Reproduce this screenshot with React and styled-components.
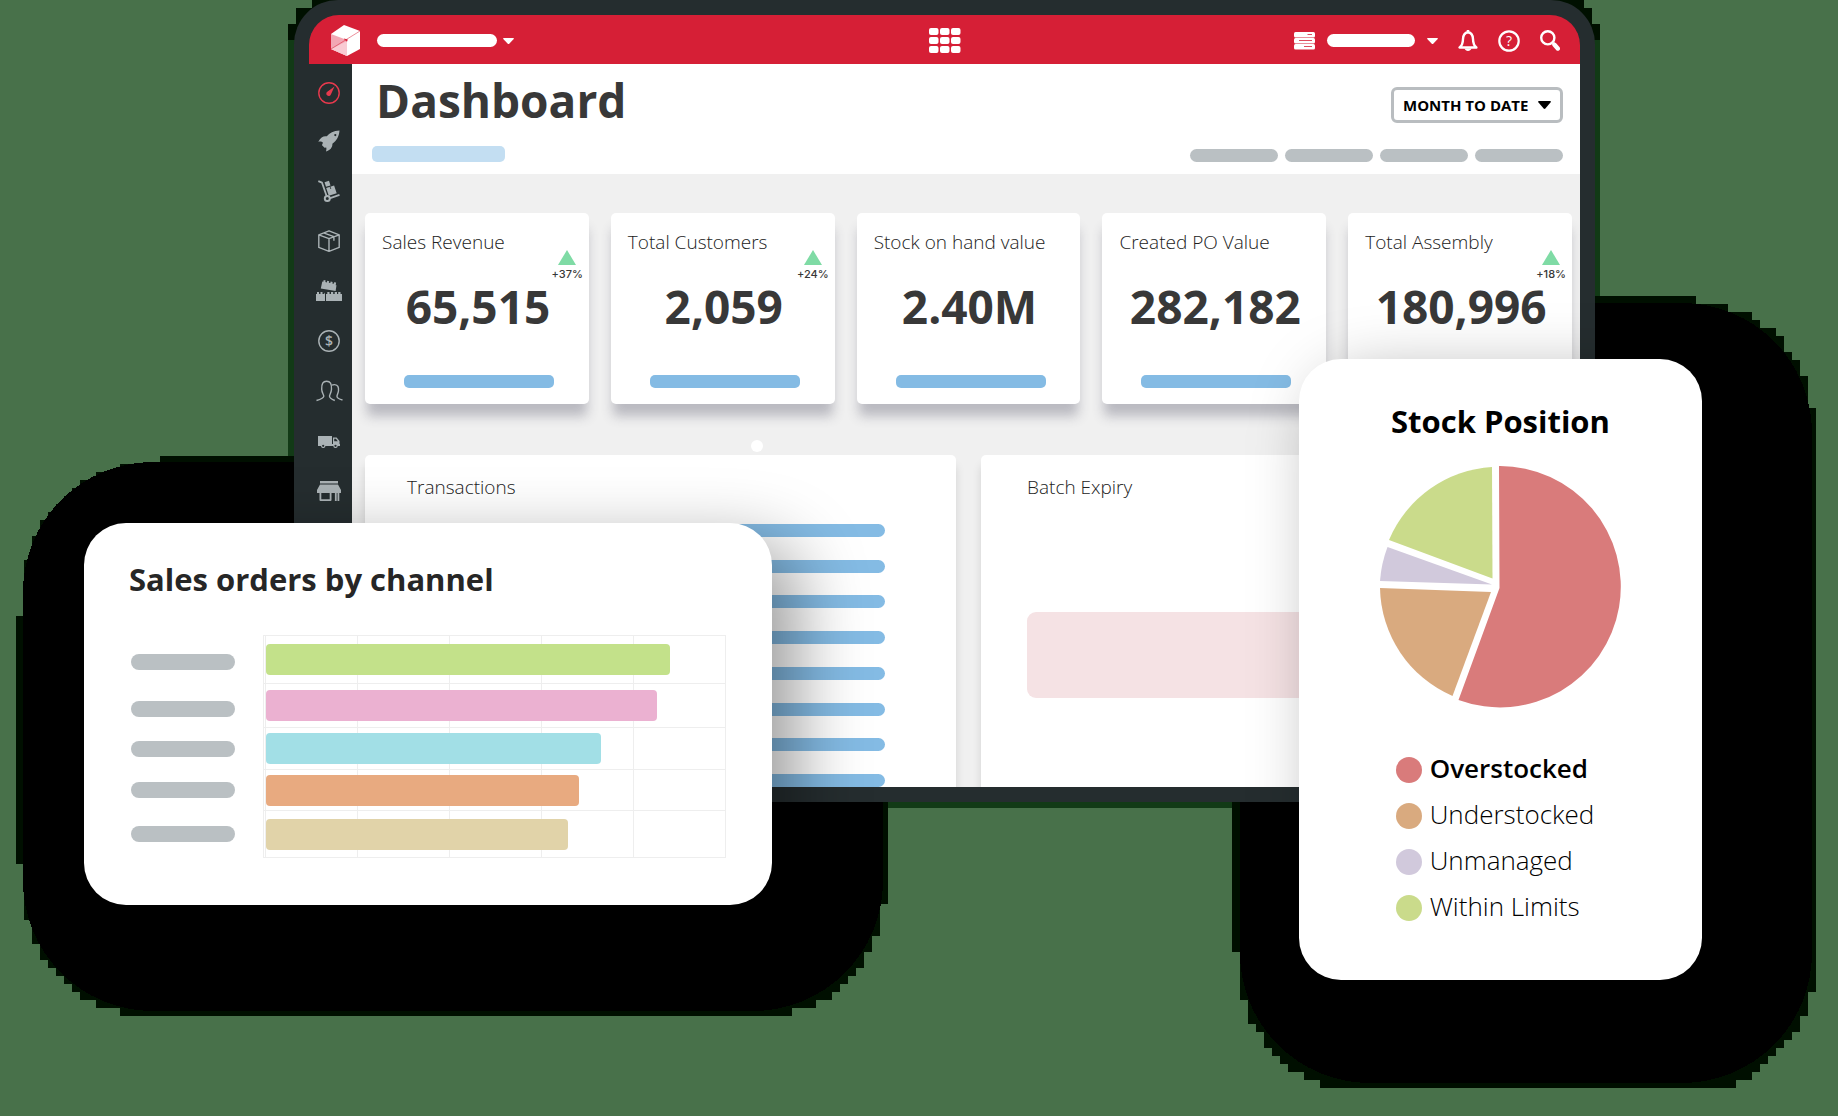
import React from "react";
import styled, { createGlobalStyle } from "styled-components";

const color = {
  page: "#48714a",
  bezel: "#252d2f",
  brand: "#d61f36",
  canvas: "#f0f0f0",
  ink: "#383838",
  grey: "#bac0c3",
  blue: "#84bbe4",
  line: "#eeeeee",
  nav: "#aab2b5",
};

const GlobalStyle = createGlobalStyle`
  *, *::before, *::after { box-sizing: border-box; }
  body {
    margin: 0;
    background: ${color.page};
    color: ${color.ink};
    font-family: "Open Sans", "Noto Sans", sans-serif;
  }
  h1, h2, h3, p, ul { margin: 0; padding: 0; }
  ul { list-style: none; }
  button { padding: 0; border: 0; background: none; color: inherit; font: inherit; cursor: pointer; }
  svg { display: block; }
`;

/* ---------- stage ---------- */

const Stage = styled.main`
  position: relative;
  min-height: 100vh;
  overflow: hidden;
`;

const Backdrop = styled.svg`
  position: absolute;
  top: 0;
  left: 0;
  width: 100%;
  height: 1116px;
`;

const Tablet = styled.section`
  position: relative;
  margin: 0 13.22% 0 16%;
  padding: 15px;
  border-radius: 44px 44px 0 0;
  background: ${color.bezel};
`;

const Screen = styled.div`
  overflow: hidden;
  border-radius: 30px 30px 0 0;
`;

/* ---------- top bar ---------- */

const TopBar = styled.header`
  display: grid;
  grid-template-columns: 1fr auto 1fr;
  align-items: center;
  height: 49px;
  padding: 2px 20px 0;
  background: ${color.brand};
  color: #fff;
`;

const BarGroup = styled.div`
  display: flex;
  align-items: center;
  justify-content: ${(p) => (p.$end ? "flex-end" : "flex-start")};
  gap: ${(p) => (p.$gap ? p.$gap : 20)}px;
  padding-left: 2px;
`;

const MenuButton = styled.button`
  display: flex;
  align-items: center;
  gap: ${(p) => p.$gap}px;
`;

const Pill = styled.span`
  display: block;
  width: ${(p) => p.$w};
  height: ${(p) => p.$h}px;
  border-radius: ${(p) => (p.$r ? p.$r : 8)}px;
  background: ${(p) => p.$bg};
`;

/* ---------- screen body ---------- */

const Columns = styled.div`
  display: grid;
  grid-template-columns: 43px minmax(0, 1fr);
`;

const SideNav = styled.nav`
  display: grid;
  grid-template-rows: 46px;
  grid-auto-rows: 50px;
  align-content: start;
  padding: 6px 3px 0 0;
  background: ${color.bezel};
`;

const NavLink = styled.a`
  display: flex;
  align-items: center;
  justify-content: center;
  color: ${(p) => (p.$active ? "#e6394d" : color.nav)};
`;

const PageHead = styled.div`
  padding: 14px 17px 12px 20px;
  background: #fff;
`;

const HeadRow = styled.div`
  display: flex;
  align-items: flex-end;
  justify-content: space-between;
  margin-top: ${(p) => (p.$sub ? 23 : 0)}px;
`;

const PageTitle = styled.h1`
  padding-left: 4px;
  font-size: 46px;
  line-height: 45px;
  font-weight: 700;
`;

const SelectBox = styled.div`
  display: grid;
  align-items: center;
  width: 172px;
  color: #000;

  & > * { grid-area: 1 / 1; }
  & > svg { justify-self: end; margin-right: 12px; pointer-events: none; }
`;

const RangeSelect = styled.select`
  appearance: none;
  width: 100%;
  height: 36px;
  padding: 0 32px 0 9px;
  border: 3px solid #b9bdc0;
  border-radius: 6px;
  background: #fff;
  color: #000;
  font-family: inherit;
  font-size: 15px;
  font-weight: 700;
`;

const TabRow = styled.div`
  display: flex;
  gap: 7px;
`;

const Content = styled.div`
  padding: 39px 8px 0 13px;
  background: ${color.canvas};
`;

const KpiGrid = styled.div`
  display: grid;
  grid-template-columns: repeat(5, minmax(0, 1fr));
  gap: 22px;
`;

const KpiCard = styled.article`
  border-radius: 5px;
  padding-bottom: 16px;
  background: #fff;
  box-shadow: 0 14px 12px -2px rgba(60, 60, 84, 0.3);
`;

const KpiTop = styled.div`
  display: flex;
  justify-content: space-between;
  height: 70px;
  padding: 17px 6px 0 17px;
`;

const CardTitle = styled.h2`
  color: #222;
  font-size: 19px;
  line-height: 24px;
  font-weight: 300;
  white-space: nowrap;
`;

const Trend = styled.p`
  display: flex;
  flex-direction: column;
  align-items: center;
  gap: 2px;
  padding-top: 20px;
  font-family: Inter, sans-serif;
  font-size: 11px;
  line-height: 14px;
  font-weight: 500;
`;

const KpiValue = styled.p`
  padding-left: 2px;
  font-size: 46px;
  line-height: 46px;
  font-weight: 700;
  text-align: center;
`;

const KpiFoot = styled.div`
  display: flex;
  justify-content: center;
  margin-top: 46px;
  padding-left: 4px;
`;

const PagerRow = styled.div`
  padding: 36px 0 3px 32%;
`;

const PagerDot = styled.span`
  display: block;
  width: 12px;
  height: 12px;
  border-radius: 50%;
  background: #fff;
`;

const PanelGrid = styled.div`
  display: grid;
  grid-template-columns: repeat(2, minmax(0, 1fr));
  gap: 25px;
  height: 332px;
`;

const Panel = styled.article`
  display: flex;
  flex-direction: column;
  padding: 20px ${(p) => p.$right}px 0 ${(p) => p.$left}px;
  border-radius: 5px 5px 0 0;
  background: #fff;
  box-shadow: 0 10px 10px rgba(0, 0, 0, 0.12);
`;

const LineList = styled.div`
  display: flex;
  flex: 1;
  flex-direction: column;
  justify-content: space-between;
  margin-top: 25px;
`;

const ExpiryBlock = styled.div`
  height: 86px;
  margin-top: 113px;
  border-radius: 9px;
  background: #f5e2e4;
`;

/* ---------- floating cards ---------- */

const FloatCard = styled.section`
  position: absolute;
  border-radius: 42px;
  background: #fff;
  box-shadow: 24px 22px 70px rgba(0, 0, 0, 0.4);
`;

const SalesCard = styled(FloatCard)`
  top: 523px;
  left: 4.57%;
  width: 37.43%;
  padding: 36px 46px 47px 45px;
`;

const StockCard = styled(FloatCard)`
  top: 359px;
  right: 7.4%;
  width: 21.93%;
  padding: 42px 0 51px;
`;

const FloatTitle = styled.h2`
  color: ${(p) => (p.$center ? "#000" : "#262626")};
  font-size: 31px;
  line-height: 40px;
  font-weight: 700;
  text-align: ${(p) => (p.$center ? "center" : "left")};
  white-space: nowrap;
`;

const Chart = styled.div`
  display: grid;
  grid-template-columns: 104px minmax(0, 1fr);
  column-gap: 28px;
  margin-top: 36px;
  padding-left: 2px;
`;

const ChartLabels = styled.div`
  display: grid;
  grid-template-rows: 53px 41px 40px 42px 45px;
  align-items: center;
`;

const Plot = styled.div`
  display: grid;
  grid-template-rows: 48px 44px 42px 41px 47px;
  border-top: 1px solid ${color.line};
  border-left: 1px solid ${color.line};
  background: repeating-linear-gradient(to left, ${color.line} 0 1px, transparent 1px 19.9%);
`;

const PlotRow = styled.div`
  display: flex;
  align-items: center;
  padding-left: 2px;
  border-bottom: 1px solid ${color.line};
`;

const Bar = styled.div`
  height: 31px;
  border-radius: 4px;
`;

const PieWrap = styled.div`
  display: flex;
  justify-content: center;
  margin-top: 25px;

  & > svg { overflow: visible; }
`;

const Legend = styled.ul`
  margin-top: 38px;
  padding-left: 24%;
`;

const LegendItem = styled.li`
  display: flex;
  align-items: center;
  gap: 8px;
  height: 46px;
  color: #000;
  font-size: 26px;
  line-height: 36px;
  font-weight: ${(p) => (p.$strong ? 600 : 300)};
  white-space: nowrap;

  &::before {
    content: "";
    width: 26px;
    height: 26px;
    margin-top: 3px;
    border-radius: 50%;
    background: ${(p) => p.$dot};
  }
`;

/* ---------- icons ---------- */

const Caret = ({ w = 11, h = 6 }) => (
  <svg width={w} height={h} viewBox="0 0 12 7" preserveAspectRatio="none" fill="currentColor" aria-hidden="true">
    <path d="M1 0h10c.9 0 1.200.6.700 1.200L6.800 6.600c-.5.500-1.100.5-1.600 0L.3 1.200C-.2.600.1 0 1 0Z" />
  </svg>
);

const Logo = () => (
  <svg width="29" height="31" viewBox="0 0 29 31" role="img" aria-label="Home">
    <path fill="#fff" d="M13 0 29 6v18l-13 7-16-7V9Z" />
    <path fill="#f3a7b4" d="M0 9l16 6v16L0 24Z" />
    <path fill="#f9cbd3" d="M0 24l16-8v15Z" />
    <path fill="none" stroke={color.brand} strokeWidth=".5" d="M0 24 29 6M13 14l3 2" />
    <path fill={color.brand} d="M13 13.500l3.800 1-.8 2.300Z" />
  </svg>
);

const AppsIcon = () => (
  <svg width="32" height="25" viewBox="0 0 32 25" fill="#fff" aria-hidden="true">
    {[0, 9, 18].map((y) =>
      [0, 11, 22].map((x) => <rect key={`${x}-${y}`} x={x} y={y} width="9.500" height="7" rx="2" />)
    )}
  </svg>
);

const StackIcon = () => (
  <svg width="21" height="18" viewBox="0 0 21 18" aria-hidden="true">
    {[0, 6, 12].map((y) => (
      <rect key={y} y={y} width="21" height="5.500" rx="1.500" fill="#fff" />
    ))}
    <path stroke={color.brand} strokeWidth=".8" d="M13.500 2.500H18M5 8.500h13M10 14.500h8" />
  </svg>
);

const BellIcon = () => (
  <svg width="20" height="21" viewBox="0 0 20 21" aria-hidden="true">
    <path
      d="M10 2.200c-3.600.6-4.900 3.300-5 6.800-.1 4.500-1 6.600-3.400 8.500h16.800C16 15.600 15.100 13.500 15 9c-.1-3.500-1.400-6.200-5-6.800Z"
      fill="none" stroke="#fff" strokeWidth="2.400" strokeLinejoin="round"
    />
    <path d="M8.700 0h2.600v3H8.700ZM6.500 18.500h7c-.5 1.600-1.900 2.500-3.500 2.500s-3-.9-3.500-2.500Z" fill="#fff" />
  </svg>
);

const HelpIcon = () => (
  <svg width="22" height="22" viewBox="0 0 22 22" aria-hidden="true">
    <circle cx="11" cy="11" r="9.700" fill="none" stroke="#fff" strokeWidth="2.200" />
    <text x="11" y="16" textAnchor="middle" fontSize="14" fontWeight="400" fill="#fff">?</text>
  </svg>
);

const SearchIcon = () => (
  <svg width="20" height="21" viewBox="0 0 20 21" fill="none" stroke="#fff" aria-hidden="true">
    <circle cx="7.800" cy="7.800" r="6.600" strokeWidth="2.400" />
    <path d="M13 13l1.500 1.500" strokeWidth="3" />
    <path d="M14.500 14.800l3.300 3.700" strokeWidth="4.400" strokeLinecap="round" />
  </svg>
);

const NavIcon = ({ w = 22, h = 22, children }) => (
  <svg width={w} height={h} viewBox={`0 0 ${w} ${h}`} fill="none" stroke="currentColor" strokeWidth="1.400" strokeLinejoin="round" aria-hidden="true">
    {children}
  </svg>
);

const navItems = [
  {
    label: "Dashboard",
    icon: (
      <NavIcon>
        <circle cx="11" cy="11" r="10.200" />
        <path fill="currentColor" stroke="none" d="M16.500 4.500 13 12.300a2.400 2.400 0 1 1-3.700-2.600Z" />
      </NavIcon>
    ),
  },
  {
    label: "Launch",
    icon: (
      <NavIcon>
        <path
          fill="currentColor" stroke="none" fillRule="evenodd"
          d="M21.500.5C15.500.8 11.500 2.800 8.800 6.300 5.300 5.800 2.800 7.300.3 11.800c2-.6 3.500-.5 4.400.4.2 1.200-.2 2-.9 2.800l2.700 2.700 1.700-.3c.4 1.200.2 2.600-.3 4.200 4.200-1.200 6.600-4 6.500-7.800 4.300-3.200 6.600-7.300 7.100-13.300ZM17.300 4a1.100 1.100 0 1 1 0 2.200 1.100 1.100 0 0 1 0-2.200Z"
        />
      </NavIcon>
    ),
  },
  {
    label: "Purchases",
    icon: (
      <NavIcon>
        <path strokeWidth="1.800" d="M.3 1.200 4 2.700l4.800 13.800M11.500 18.300l10-3.500" />
        <circle cx="9.300" cy="18.500" r="2.500" strokeWidth="2" />
        <g fill="currentColor" stroke="none">
          <path d="M6.500 2.200 11 .8l1.500 4.600L8 6.800ZM8.200 8l7.900-2.600 2.600 7.800-7.900 2.600Z" />
        </g>
        <path stroke={color.bezel} strokeWidth=".8" d="m12 6.500.8 2.500" />
      </NavIcon>
    ),
  },
  {
    label: "Products",
    icon: (
      <NavIcon>
        <path d="M.8 4.800 11 .8l10.200 4v12.600L11 21.300.8 17.400ZM.8 4.800 11 8.600l10.200-3.800M11 8.600v12.700M5.500 2.900l10.400 3.800v4" />
      </NavIcon>
    ),
  },
  {
    label: "Production",
    icon: (
      <NavIcon w={26} h={22}>
        <g fill="currentColor" stroke="none">
          <path d="M0 14h1v-2h2v2h1.500v-2h2v2H8v-1.500L9 14v7H0ZM10 14h1.300v-2h2.200v2H15v-2h2.200v2h1.500v-2H21v2h1.200v-2h2.300v2H26v7H10Z" />
          <path d="m6.300 1.500 1 .2.400-1.700 2 .4-.4 1.700 1.500.3.400-1.600 2 .4-.4 1.600 1.500.3.400-1.600 2 .4-.4 1.600 1.500.3.300-1.600 2 .4-.4 2.600.800.100-.9 5.600L4.800 8.500Z" />
        </g>
      </NavIcon>
    ),
  },
  {
    label: "Sales",
    icon: (
      <NavIcon>
        <circle cx="11" cy="11" r="10.200" />
        <text x="11" y="16" textAnchor="middle" fontSize="14" fontWeight="600" fill="currentColor" stroke="none">$</text>
      </NavIcon>
    ),
  },
  {
    label: "Customers",
    icon: (
      <NavIcon w={27} h={22}>
        <path d="M.5 20.500c4.500-1.300 7.200-2.300 7.300-4.300 0-1.600-2-3.500-2.100-7-.2-5.300 1.300-8 4.900-8s5.200 2.700 4.900 8c-.2 3.500-2 5.400-2 7 .1 2 2 3 5.300 4.300" />
        <path d="M16 5.200c.8-.5 1.700-.7 2.800-.6 3 .2 4 2.600 3.700 6.200-.2 2.600-1.600 4-1.500 5.700.1 1.700 2 2.600 5.500 3.500" />
      </NavIcon>
    ),
  },
  {
    label: "Shipping",
    icon: (
      <NavIcon w={22} h={13}>
        <path fill="currentColor" stroke="none" fillRule="evenodd" d="M0 1h14v9.500H0ZM15 2.500h3.600L21.500 6v4.500H15ZM16.200 3.800v2.400h3.600l-1.900-2.400Z" />
        <path strokeWidth="2" d="M0 10h22" />
        <circle cx="5.200" cy="10.800" r="1.700" fill={color.bezel} strokeWidth="1.100" />
        <circle cx="17.500" cy="10.800" r="1.700" fill={color.bezel} strokeWidth="1.100" />
      </NavIcon>
    ),
  },
  {
    label: "Stores",
    icon: (
      <NavIcon w={24} h={20}>
        <path fill="currentColor" stroke="none" d="M3 0h18v2.500H3ZM3 3.500h18L24 9v3H0V9Z" />
        <path strokeWidth="1.800" d="M3.400 12v7.100h10.200V12M18.800 12v8M21.400 12v8" />
      </NavIcon>
    ),
  },
];

/* ---------- data ---------- */

const kpis = [
  { title: "Sales Revenue", value: "65,515", trend: "+37%" },
  { title: "Total Customers", value: "2,059", trend: "+24%" },
  { title: "Stock on hand value", value: "2.40M" },
  { title: "Created PO Value", value: "282,182" },
  { title: "Total Assembly", value: "180,996", trend: "+18%" },
];

const channels = [
  { share: 87.8, fill: "#c3e18a" },
  { share: 85.1, fill: "#ebb1d1" },
  { share: 72.8, fill: "#a2dfe6" },
  { share: 68.1, fill: "#e8aa80" },
  { share: 65.6, fill: "#e1d3a9" },
];

const stock = [
  { label: "Overstocked", fill: "#d97b7b", path: "M119 0A120.700 120.700 0 1 1 78.500 234L119.500 122Z" },
  { label: "Understocked", fill: "#d9aa7f", path: "M0 122A120 120 0 0 0 72.500 230L111 126Z" },
  { label: "Unmanaged", fill: "#d1c9dc", path: "M0 115A120 120 0 0 1 7.500 81L112 118.500Z" },
  { label: "Within Limits", fill: "#cadb8b", path: "M112 1A120 120 0 0 0 9 74L112.500 112.500Z" },
];

/* Stair-stepped silhouettes on an 8px grid */
const salesSteps =
  "M160 456H400V600H888V904H880V936H872V952H864V968H856V976H848V984H840V992H832V1000H816V1008H792V1016H120V1008H96V1000H80V992H72V984H64V976H56V968H48V960H40V944H32V920H24V864H16V616H24V560H32V536H40V520H48V512H56V504H64V496H72V488H80V480H96V472H120V464H160Z";
const stockSteps =
  "M1500 296H1696V304H1728V312H1752V320H1760V328H1776V336H1784V352H1792V360H1800V376H1808V408H1816V992H1808V1016H1800V1032H1792V1040H1784V1048H1776V1056H1768V1064H1760V1072H1752V1080H1736V1088H1320V1080H1304V1072H1288V1064H1280V1056H1272V1048H1264V1032H1256V1024H1248V1000H1240V952H1232V700H1500Z";

const ShadowBackdrop = () => (
  <Backdrop viewBox="0 0 1838 1116" preserveAspectRatio="none" shapeRendering="crispEdges" aria-hidden="true">
    <path fill="#123a16" d="M312 0H1584V8H1592V24H1600V808H288V24H296V8H312Z" />
    <path fill="#001000" d="M312 0H1584V8H1592V24H1600V40H288V24H296V8H312Z" />
    <path fill="#000f00" d={salesSteps} />
    <path fill="#000f00" d={stockSteps} />
    <rect x="23" y="462" width="860" height="549" rx="130" fill="#000" />
    <rect x="1240" y="303" width="572" height="780" rx="130" fill="#000" />
    <path fill="#000" d="M400 600H880V802H400ZM1240 700H1500V802H1240Z" />
    <path fill={color.page} d="M888 808H1232V880H888Z" />
  </Backdrop>
);

export default function App() {
  return (
    <>
      <GlobalStyle />
      <Stage>
        <ShadowBackdrop />

        <Tablet>
          <Screen>
            <TopBar>
              <BarGroup $gap={17}>
                <Logo />
                <MenuButton type="button" aria-label="Company menu" $gap={6}>
                  <Pill $w="120px" $h={13} $bg="#fff" />
                  <Caret />
                </MenuButton>
              </BarGroup>
              <button type="button" aria-label="All modules">
                <AppsIcon />
              </button>
              <BarGroup $end>
                <MenuButton type="button" aria-label="Location menu" $gap={12}>
                  <StackIcon />
                  <Pill $w="88px" $h={13} $bg="#fff" />
                  <Caret />
                </MenuButton>
                <button type="button" aria-label="Notifications"><BellIcon /></button>
                <button type="button" aria-label="Help"><HelpIcon /></button>
                <button type="button" aria-label="Search"><SearchIcon /></button>
              </BarGroup>
            </TopBar>

            <Columns>
              <SideNav aria-label="Modules">
                {navItems.map((item, i) => (
                  <NavLink key={item.label} href="#" aria-label={item.label} $active={i === 0}>
                    {item.icon}
                  </NavLink>
                ))}
              </SideNav>

              <div>
                <PageHead>
                  <HeadRow>
                    <PageTitle>Dashboard</PageTitle>
                    <SelectBox>
                      <RangeSelect aria-label="Date range" defaultValue="mtd">
                        <option value="mtd">MONTH TO DATE</option>
                      </RangeSelect>
                      <Caret w={13} h={8} />
                    </SelectBox>
                  </HeadRow>
                  <HeadRow $sub>
                    <Pill $w="133px" $h={16} $r={5} $bg="#c3def2" />
                    <TabRow>
                      {[0, 1, 2, 3].map((i) => (
                        <Pill key={i} $w="88px" $h={13} $bg={color.grey} />
                      ))}
                    </TabRow>
                  </HeadRow>
                </PageHead>

                <Content>
                  <KpiGrid>
                    {kpis.map((k) => (
                      <KpiCard key={k.title}>
                        <KpiTop>
                          <CardTitle>{k.title}</CardTitle>
                          {k.trend && (
                            <Trend>
                              <svg width="18" height="15" viewBox="0 0 18 15" aria-hidden="true">
                                <path fill="#7fdba5" d="M9 0l9 15H0Z" />
                              </svg>
                              {k.trend}
                            </Trend>
                          )}
                        </KpiTop>
                        <KpiValue>{k.value}</KpiValue>
                        <KpiFoot>
                          <Pill $w="150px" $h={13} $r={5} $bg={color.blue} />
                        </KpiFoot>
                      </KpiCard>
                    ))}
                  </KpiGrid>

                  <PagerRow>
                    <PagerDot />
                  </PagerRow>

                  <PanelGrid>
                    <Panel $left={42} $right={71}>
                      <CardTitle>Transactions</CardTitle>
                      <LineList>
                        {Array.from({ length: 8 }, (_, i) => (
                          <Pill key={i} $w="100%" $h={13} $bg={color.blue} />
                        ))}
                      </LineList>
                    </Panel>
                    <Panel $left={46} $right={48}>
                      <CardTitle>Batch Expiry</CardTitle>
                      <ExpiryBlock />
                    </Panel>
                  </PanelGrid>
                </Content>
              </div>
            </Columns>
          </Screen>
        </Tablet>

        <SalesCard>
          <FloatTitle>Sales orders by channel</FloatTitle>
          <Chart>
            <ChartLabels>
              {channels.map((c) => (
                <Pill key={c.fill} $w="100%" $h={16} $bg={color.grey} />
              ))}
            </ChartLabels>
            <Plot>
              {channels.map((c) => (
                <PlotRow key={c.fill}>
                  <Bar style={{ width: `${c.share}%`, background: c.fill }} />
                </PlotRow>
              ))}
            </Plot>
          </Chart>
        </SalesCard>

        <StockCard>
          <FloatTitle $center>Stock Position</FloatTitle>
          <PieWrap>
            <svg width="241" height="241" viewBox="0 0 241 241" role="img" aria-label="Stock position chart">
              {stock.map((s) => (
                <path key={s.label} d={s.path} fill={s.fill} />
              ))}
            </svg>
          </PieWrap>
          <Legend>
            {stock.map((s, i) => (
              <LegendItem key={s.label} $dot={s.fill} $strong={i === 0}>
                {s.label}
              </LegendItem>
            ))}
          </Legend>
        </StockCard>
      </Stage>
    </>
  );
}
